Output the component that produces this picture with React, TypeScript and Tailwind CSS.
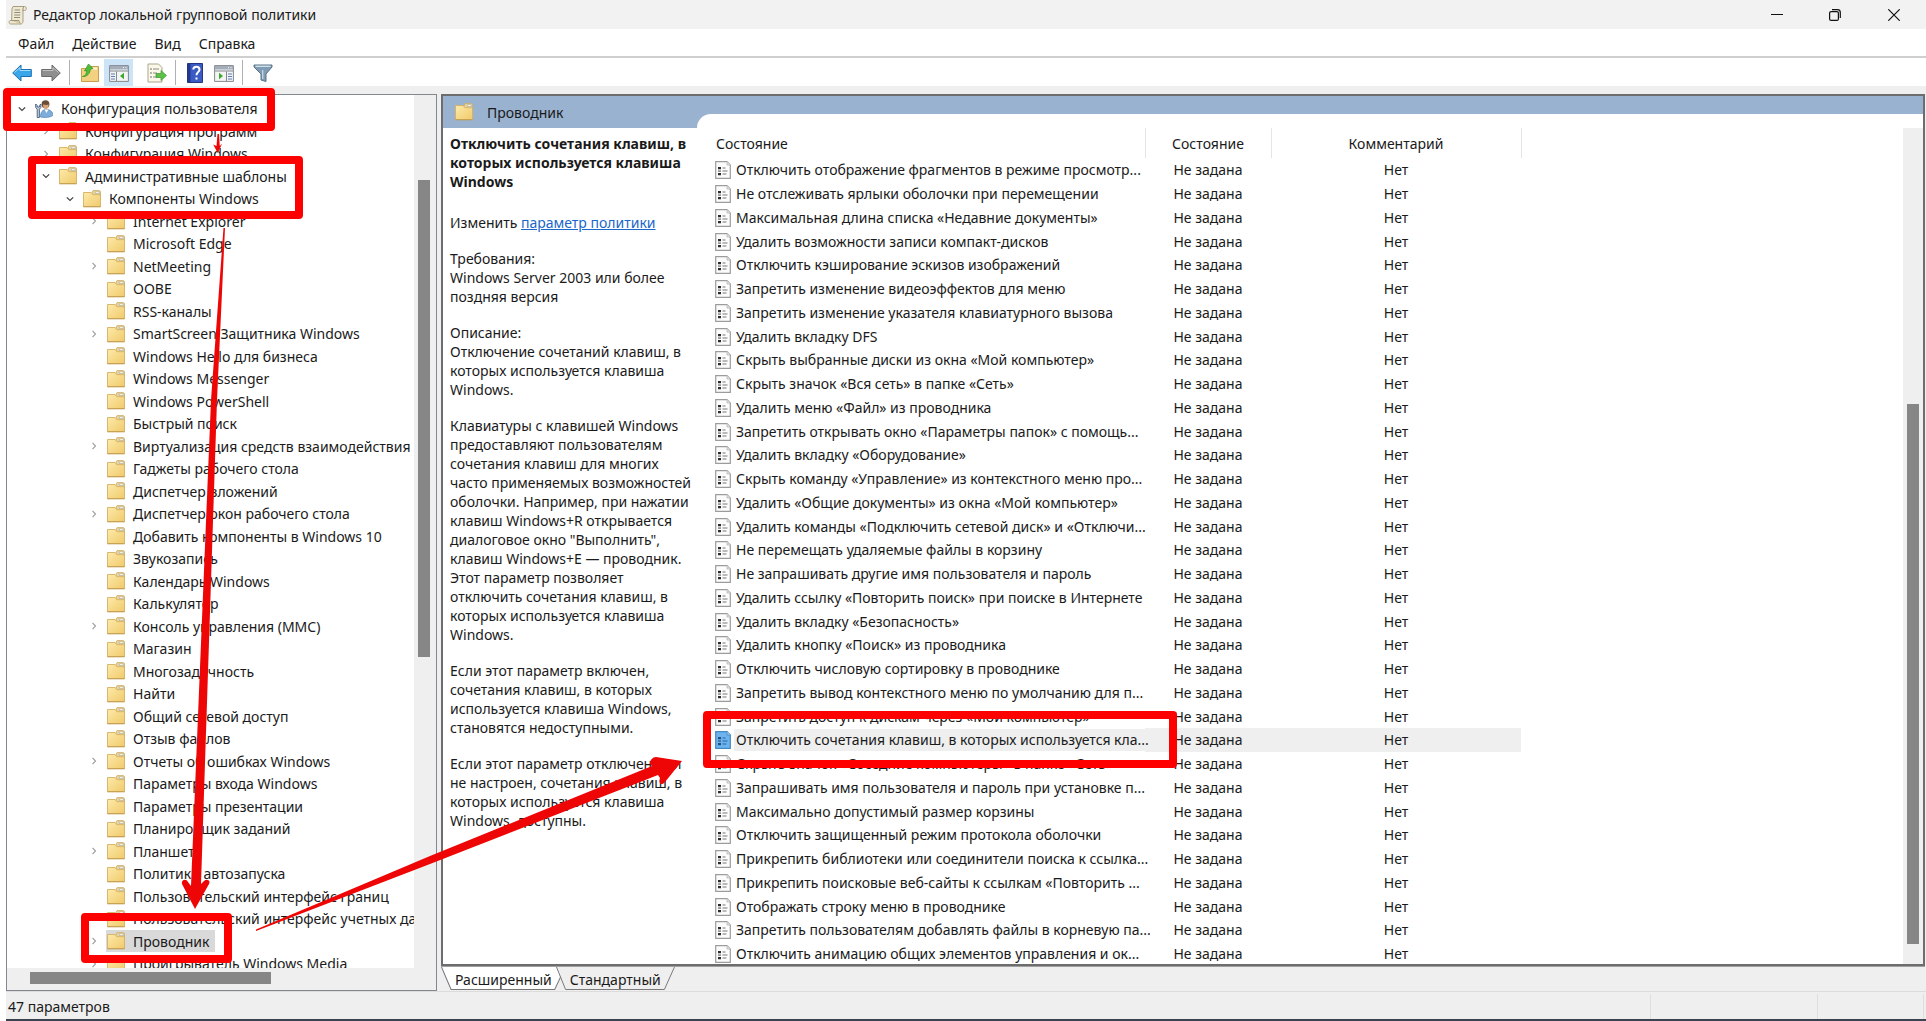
import { useState } from 'react'
import clsx from 'clsx'

type TreeNode = { label: string; level: number; state?: 'open' | 'closed'; user?: boolean }

const tree: TreeNode[] = [
  { label: 'Конфигурация пользователя', level: 0, state: 'open', user: true },
  { label: 'Конфигурация программ', level: 1, state: 'closed' },
  { label: 'Конфигурация Windows', level: 1, state: 'closed' },
  { label: 'Административные шаблоны', level: 1, state: 'open' },
  { label: 'Компоненты Windows', level: 2, state: 'open' },
  { label: 'Internet Explorer', level: 3, state: 'closed' },
  { label: 'Microsoft Edge', level: 3 },
  { label: 'NetMeeting', level: 3, state: 'closed' },
  { label: 'OOBE', level: 3 },
  { label: 'RSS-каналы', level: 3 },
  { label: 'SmartScreen Защитника Windows', level: 3, state: 'closed' },
  { label: 'Windows Hello для бизнеса', level: 3 },
  { label: 'Windows Messenger', level: 3 },
  { label: 'Windows PowerShell', level: 3 },
  { label: 'Быстрый поиск', level: 3 },
  { label: 'Виртуализация средств взаимодействия с', level: 3, state: 'closed' },
  { label: 'Гаджеты рабочего стола', level: 3 },
  { label: 'Диспетчер вложений', level: 3 },
  { label: 'Диспетчер окон рабочего стола', level: 3, state: 'closed' },
  { label: 'Добавить компоненты в Windows 10', level: 3 },
  { label: 'Звукозапись', level: 3 },
  { label: 'Календарь Windows', level: 3 },
  { label: 'Калькулятор', level: 3 },
  { label: 'Консоль управления (MMC)', level: 3, state: 'closed' },
  { label: 'Магазин', level: 3 },
  { label: 'Многозадачность', level: 3 },
  { label: 'Найти', level: 3 },
  { label: 'Общий сетевой доступ', level: 3 },
  { label: 'Отзыв файлов', level: 3 },
  { label: 'Отчеты об ошибках Windows', level: 3, state: 'closed' },
  { label: 'Параметры входа Windows', level: 3 },
  { label: 'Параметры презентации', level: 3 },
  { label: 'Планировщик заданий', level: 3 },
  { label: 'Планшет', level: 3, state: 'closed' },
  { label: 'Политики автозапуска', level: 3 },
  { label: 'Пользовательский интерфейс границ', level: 3 },
  { label: 'Пользовательский интерфейс учетных данных', level: 3 },
  { label: 'Проводник', level: 3, state: 'closed' },
  { label: 'Проигрыватель Windows Media', level: 3, state: 'closed' },
]

const policies = [
  'Отключить отображение фрагментов в режиме просмотр...',
  'Не отслеживать ярлыки оболочки при перемещении',
  'Максимальная длина списка «Недавние документы»',
  'Удалить возможности записи компакт-дисков',
  'Отключить кэширование эскизов изображений',
  'Запретить изменение видеоэффектов для меню',
  'Запретить изменение указателя клавиатурного вызова',
  'Удалить вкладку DFS',
  'Скрыть выбранные диски из окна «Мой компьютер»',
  'Скрыть значок «Вся сеть» в папке «Сеть»',
  'Удалить меню «Файл» из проводника',
  'Запретить открывать окно «Параметры папок» с помощь...',
  'Удалить вкладку «Оборудование»',
  'Скрыть команду «Управление» из контекстного меню про...',
  'Удалить «Общие документы» из окна «Мой компьютер»',
  'Удалить команды «Подключить сетевой диск» и «Отключи...',
  'Не перемещать удаляемые файлы в корзину',
  'Не запрашивать другие имя пользователя и пароль',
  'Удалить ссылку «Повторить поиск» при поиске в Интернете',
  'Удалить вкладку «Безопасность»',
  'Удалить кнопку «Поиск» из проводника',
  'Отключить числовую сортировку в проводнике',
  'Запретить вывод контекстного меню по умолчанию для п...',
  'Запретить доступ к дискам через «Мой компьютер»',
  'Отключить сочетания клавиш, в которых используется кла...',
  'Скрыть значок «Соседние компьютеры» в папке «Сеть»',
  'Запрашивать имя пользователя и пароль при установке п...',
  'Максимально допустимый размер корзины',
  'Отключить защищенный режим протокола оболочки',
  'Прикрепить библиотеки или соединители поиска к ссылка...',
  'Прикрепить поисковые веб-сайты к ссылкам «Повторить ...',
  'Отображать строку меню в проводнике',
  'Запретить пользователям добавлять файлы в корневую па...',
  'Отключить анимацию общих элементов управления и ок...',
]

const description = [
  ['Требования:', 'Windows Server 2003 или более', 'поздняя версия'],
  ['Описание:', 'Отключение сочетаний клавиш, в', 'которых используется клавиша', 'Windows.'],
  [
    'Клавиатуры с клавишей Windows',
    'предоставляют пользователям',
    'сочетания клавиш для многих',
    'часто применяемых возможностей',
    'оболочки. Например, при нажатии',
    'клавиш Windows+R открывается',
    'диалоговое окно "Выполнить",',
    'клавиш Windows+E — проводник.',
    'Этот параметр позволяет',
    'отключить сочетания клавиш, в',
    'которых используется клавиша',
    'Windows.',
  ],
  ['Если этот параметр включен,', 'сочетания клавиш, в которых', 'используется клавиша Windows,', 'становятся недоступными.'],
  ['Если этот параметр отключен или', 'не настроен, сочетания клавиш, в', 'которых используется клавиша', 'Windows, доступны.'],
]

const indents = ['pl-[7px]', 'pl-[31px]', 'pl-[55px]', 'pl-[79px]']

function FolderIcon() {
  return (
    <svg className="h-[18px] w-[18px] shrink-0" viewBox="0 0 18 18">
      <defs>
        <linearGradient id="folder" x1="0" y1="0" x2="1" y2="1">
          <stop offset="0" stopColor="#fdeaa9" />
          <stop offset="1" stopColor="#f0ca6c" />
        </linearGradient>
      </defs>
      <path d="M8.500 4 10 .6h6.500l1 1V6h-9z" fill="#ead59c" stroke="#c9a95f" strokeWidth=".8" />
      <path d="M12.300 1.800h4v1.700h-4z" fill="#fff" stroke="#aaa593" strokeWidth=".6" />
      <path d="M.5 2.500h7.700l1.600 2.200h7.700v11.800H.5z" fill="url(#folder)" stroke="#d5b063" strokeWidth=".9" />
      <path d="M.3 16.800h17.400" stroke="#c29c4c" strokeWidth="1" />
    </svg>
  )
}

function UserIcon() {
  return (
    <svg className="h-[18px] w-[18px] shrink-0" viewBox="0 0 18 18">
      <circle cx="10.500" cy="4.200" r="3.900" fill="#6b4d35" />
      <path d="M8 4.500c0 3.200 1.200 4.800 2.800 4.800s3-2 2.800-5c-2 1.200-3.600.2-5.600.2z" fill="#d9a47a" />
      <path d="M5.500 17c0-5 2-7.500 6-7.500s6.500 2.500 6.300 6c-2 1.800-8 2.500-12.300 1.500z" fill="#7fadd9" stroke="#4d80b5" strokeWidth=".7" />
      <path d="m9.500 9.500 2 3.500 2-3.500" fill="#fff" />
      <path d="M.7 4v3.500l1.500 1.700v8.300h2.200V9.200l1.400-1.700V4L4.400 5.500V7H2.200V5.500z" fill="#c5ced9" stroke="#3f5c7c" strokeWidth=".9" />
    </svg>
  )
}

function PolicyIcon({ active }: { active: boolean }) {
  return (
    <svg className="block h-[18px] w-4 shrink-0" viewBox="0 0 16 18">
      <path d="M.7.7h11.300l3.300 3.300v13.300H.7z" fill={active ? '#6db3ee' : '#fcfcfc'} stroke={active ? '#4389c4' : '#9c9c9c'} strokeWidth="1.200" />
      <path d="M12 .7V4h3.300" fill={active ? '#a5d2f7' : '#e4e4e4'} stroke={active ? '#4389c4' : '#b5b5b5'} strokeWidth=".8" />
      <path d="M3 6h3v2.200H3zM3 12h3v2.200H3z" fill={active ? '#1f4f80' : '#2b2b2b'} />
      <path d="M3 9.300h3v1.600H3z" fill={active ? '#3772a8' : '#888'} />
      <path d="M7.500 7h3M7.500 10h5M7.500 13h4" stroke={active ? '#2a659c' : '#777'} />
    </svg>
  )
}

function ScrollIcon() {
  return (
    <svg className="h-5 w-5" viewBox="0 0 20 20">
      <path d="M5 1.500h11.500c2.500 0 2.500 4 0 4H15V16c0 2-1 3-2.500 3H2.800C.5 19 .6 15.500 2.600 15.500h1L4 4z" fill="#efe9d3" stroke="#a99f80" />
      <path d="M14.500 5.500c1-1 0-3 1.500-3.500" fill="none" stroke="#8f8566" />
      <path d="M6.500 5h5.500M6.300 7.500h6M6.200 10h6M6 12.500h6" stroke="#918b78" />
      <path d="M2.800 15.500h8c1 1 .5 3 1.700 3.400" fill="#d6cba6" stroke="#9f9472" />
    </svg>
  )
}

function ArrowIcon({ back }: { back?: boolean }) {
  return (
    <svg className="h-5 w-5" viewBox="0 0 20 20">
      {back ? (
        <path d="M.7 10 9 2v4.500h10.300v7H9V18z" fill="#39a6ea" stroke="#1c6fb0" strokeLinejoin="round" />
      ) : (
        <path d="M19.300 10 11 2v4.500H.7v7H11V18z" fill="#8f8f8f" stroke="#6b6b6b" strokeLinejoin="round" />
      )}
      <path d={back ? 'M2.500 9.500 8 4.500v3h10.300' : 'M1.700 7.500H12v-3l5.500 5'} fill="none" stroke={back ? '#a5dcfa' : '#c2c2c2'} />
    </svg>
  )
}

function UpFolderIcon() {
  return (
    <svg className="h-5 w-5" viewBox="0 0 20 20">
      <path d="M1.500 5.500h7l1.500-2h8.500v15h-17z" fill="#f2d181" stroke="#c8a04c" />
      <path d="M12 4.500h5v2h-5z" fill="#fff8dc" />
      <path d="M2.500 13.500c3-.5 4-3 4.300-6L4.500 8 8.500 1 13 5.500l-2.600.6c-.4 4.400-3.400 7.900-7.900 7.400z" fill="#4fbe3a" stroke="#2f8f22" strokeWidth=".7" />
    </svg>
  )
}

function PaneIcon({ right }: { right?: boolean }) {
  return (
    <svg className="h-5 w-5" viewBox="0 0 20 20">
      <path d="M.6 2.600h18.800v15.800H.6z" fill="#f4f4f4" stroke="#83888f" />
      <path d="M1 3h18v3.500H1z" fill="#a4aebb" />
      <path d="M14 4.700h1M16.500 4.700h1" stroke="#fff" />
      <path d="M1 8h18" stroke="#83888f" />
      <path d={right ? 'M12.500 8.500v9.500' : 'M7.500 8.500v9.500'} stroke="#83888f" />
      <path d={right ? 'M14 11h4M14 13.500h4M14 16h4' : 'M2 11h4M2 13.500h4M2 16h4'} stroke="#5a7fae" />
      <path d={right ? 'M5 9.800v6.400l4-3.200z' : 'M15 9.800v6.400L11 13z'} fill="#3aa92c" />
    </svg>
  )
}

function ExportIcon() {
  return (
    <svg className="h-5 w-5" viewBox="0 0 20 20">
      <path d="M1 1h10.500L15 4.500V19H1z" fill="#fbf8ea" stroke="#aaa58c" />
      <path d="M3.500 6h1M3.500 10h1M3.500 14h1" stroke="#444" strokeWidth="1.400" />
      <path d="M6 6h6M6 10h4M6 14h4" stroke="#8a8a8a" />
      <path d="M9 10.500h5V7.500l5.500 5-5.500 5v-3H9z" fill="#5cc148" stroke="#3b9a2b" strokeWidth=".7" />
    </svg>
  )
}

function HelpIcon() {
  return (
    <svg className="h-5 w-5" viewBox="0 0 20 20">
      <path d="M2.500.5h15v19h-15z" fill="#3a5bc4" stroke="#23367f" />
      <path d="M3 1h2.500v18H3z" fill="#23398f" />
      <path d="M8.300 6.500c0-3.800 6.200-3.800 6.200 0 0 2.600-3 2.700-3 5.700M11.500 14.500v2" fill="none" stroke="#fff" strokeWidth="2" />
    </svg>
  )
}

function FilterIcon() {
  return (
    <svg className="h-5 w-5" viewBox="0 0 20 20">
      <path d="M1 2h18v2l-6 7v7.500L8 17v-6L1 4z" fill="#7f9cb4" stroke="#587389" />
      <path d="M2.500 3.300h15" stroke="#d3e0ea" strokeWidth="1.400" />
      <path d="M9.700 7v9" stroke="#c3d3df" strokeWidth="1.400" />
    </svg>
  )
}

function ToolButton({ label, active, children }: { label: string; active?: boolean; children: React.ReactNode }) {
  return (
    <button
      aria-label={label}
      className={clsx('flex h-[27px] w-[29px] items-center justify-center', active && 'bg-[#cce4f7]')}
    >
      {children}
    </button>
  )
}

function Separator() {
  return <div className="mx-[4px] h-[25px] w-px bg-[#b0b0b0]" />
}

function Tree() {
  const [selected, setSelected] = useState('Проводник')

  return (
    <div className="flex w-[431px] shrink-0 flex-col border border-[#828790] bg-white">
      <div className="flex min-h-0 flex-1">
        <ul className="min-w-0 flex-1 overflow-hidden pt-[2px] text-[14px]">
          {tree.map((node) => (
            <li key={node.label} className={clsx('flex items-center whitespace-nowrap odd:h-[23px] even:h-[22px]', indents[node.level])}>
              <button className="flex w-4 shrink-0 justify-center" aria-label={node.state ? node.label : undefined} disabled={!node.state}>
                {node.state && (
                  <svg className="h-2 w-2" viewBox="0 0 8 8" fill="none" strokeWidth="1.200">
                    {node.state === 'open' ? <path d="m.8 2.300 3.200 3.200 3.200-3.200" stroke="#404040" /> : <path d="M2.500.8 5.500 4l-3 3.200" stroke="#a0a0a0" />}
                  </svg>
                )}
              </button>
              <button
                onClick={() => setSelected(node.label)}
                className={clsx('ml-1 flex h-full items-center gap-2 pr-[6px] pl-px', selected === node.label && 'bg-[#d9d9d9]')}
              >
                {node.user ? <UserIcon /> : <FolderIcon />}
                {node.label}
              </button>
            </li>
          ))}
        </ul>
        <div className="flex w-[22px] flex-col bg-[#efefef]">
          <div className="mt-[85px] ml-1 h-[477px] w-[12px] bg-[#868686]" />
        </div>
      </div>
      <div className="h-[22px] bg-[#efefef] pt-[4px] pl-[23px]">
        <div className="h-[12px] w-[241px] bg-[#868686]" />
      </div>
    </div>
  )
}

function PolicyTable() {
  const selected = 24

  return (
    <table className="w-[824px] table-fixed text-[14px] whitespace-nowrap">
      <colgroup>
        <col className="w-[448px]" />
        <col className="w-[126px]" />
        <col className="w-[250px]" />
      </colgroup>
      <thead>
        <tr className="h-[30px]">
          <th className="border-r border-[#e5e5e5] pl-[19px] text-left font-normal">Состояние</th>
          <th className="border-r border-[#e5e5e5] font-normal">Состояние</th>
          <th className="border-r border-[#e5e5e5] font-normal">Комментарий</th>
        </tr>
      </thead>
      <tbody className="text-center leading-[22px]">
        {policies.map((policy, i) => (
          <tr key={policy} className="h-[24px] nth-[4n]:h-[23px]">
            <td className="p-0">
              <div className="flex items-center pl-[18px] text-left">
                <PolicyIcon active={i === selected} />
                <span className={clsx('ml-[3px] flex-1 pl-[2px]', i === selected && 'bg-[#efefef]')}>{policy}</span>
              </div>
            </td>
            <td className={clsx('p-0', i === selected && 'bg-[#efefef]')}>Не задана</td>
            <td className={clsx('p-0', i === selected && 'bg-[#efefef]')}>Нет</td>
          </tr>
        ))}
      </tbody>
    </table>
  )
}

function Details() {
  return (
    <section className="flex min-h-0 flex-1 flex-col border-2 border-[#6d6d6d] bg-white">
      <div className="flex h-[32px] shrink-0 bg-[#99b2cf]">
        <div className="flex w-[254px] shrink-0 items-center gap-[14px] pl-[12px] text-[14px]">
          <FolderIcon />
          Проводник
        </div>
        <div className="mt-[18px] flex-1 rounded-tl-[14px] bg-white" />
      </div>
      <div className="flex min-h-0 flex-1">
        <article className="w-[254px] shrink-0 overflow-hidden pt-[6px] pl-[7px] text-[14px] leading-[19px] whitespace-nowrap">
          <h2 className="font-bold">
            Отключить сочетания клавиш, в
            <br />
            которых используется клавиша
            <br />
            Windows
          </h2>
          <p className="mt-[22px]">
            Изменить <a href="#policy" className="text-[#1a66c9] underline">параметр политики</a>
          </p>
          {description.map((lines, i) => (
            <p key={i} className="mt-[17px]">
              {lines.map((line) => (
                <span key={line} className="block">{line}</span>
              ))}
            </p>
          ))}
        </article>
        <div className="min-w-0 flex-1 overflow-hidden">
          <PolicyTable />
        </div>
        <div className="flex w-[20px] flex-col bg-[#efefef]">
          <div className="mt-[276px] ml-1 h-[540px] w-[12px] bg-[#868686]" />
        </div>
      </div>
    </section>
  )
}

function ViewTab({ label, active }: { label: string; active?: boolean }) {
  return (
    <button className="relative -mr-[10px] h-[23px] px-[14px] text-[14px] leading-[25px]">
      <svg className="absolute inset-0 h-full w-full" viewBox="0 0 124 23" preserveAspectRatio="none">
        <path d="M.5 0 10 22.500h103L123.500 0" fill={active ? '#fff' : '#efefef'} stroke="#777" />
      </svg>
      <span className="relative">{label}</span>
    </button>
  )
}

// Red marks drawn over the window: frames round the clicked items and arrows between them
function Highlights() {
  return (
    <svg className="pointer-events-none absolute top-0 left-0 h-[1021px] w-[1926px]" viewBox="0 0 1926 1021">
      <g fill="none" stroke="#fe0000" strokeWidth="8" strokeLinejoin="round">
        <rect x="7" y="92" width="264" height="35" />
        <rect x="32" y="160" width="267" height="55" />
        <rect x="85" y="917" width="143" height="42" />
        <rect x="707" y="715" width="466" height="49" />
      </g>
      <g fill="#ee0606">
        <path d="M217.500 134h1.500l.8 12 2.400-2.500-4.500 9.500-4.500-8.500 3.300 1.500z" />
        <path d="M223.500 228h1.500L217 400l-16 484 3-3c3-3 7 0 5 3l-14 25-13-25c-1-4 4-6 6-2l3 4L211 400z" />
        <path d="M256 929.500 430 856l222-90c-4-2-1-9 4-9l26 4-17 21c-3 4-7 2-5-4l-2-3L430 864 256 931z" />
      </g>
    </svg>
  )
}

export default function App() {
  return (
    <div className="relative h-screen overflow-hidden bg-white pl-[6px] font-['Noto_Sans',sans-serif] text-[#1a1a1a]">
      <div className="flex h-full flex-col border-b-2 border-[#3c4350] bg-[#efefef]">
        <header className="flex h-[29px] shrink-0 items-center bg-[#f2f2f2] pr-[2px] pl-[2px]">
          <ScrollIcon />
          <h1 className="ml-[5px] flex-1 text-[14px]">Редактор локальной групповой политики</h1>
          <div className="flex h-full">
            <button className="flex w-[58px] items-center justify-center" aria-label="Свернуть">
              <svg className="h-3 w-3" viewBox="0 0 12 12"><path d="M0 5.500h12" stroke="#111" /></svg>
            </button>
            <button className="flex w-[58px] items-center justify-center" aria-label="Развернуть">
              <svg className="h-3 w-3" viewBox="0 0 12 12" fill="none" stroke="#111" strokeWidth="1.200">
                <rect x=".6" y="2.600" width="8.800" height="8.800" rx="1.500" />
                <path d="M3 .7h5.500c1.600 0 2.800 1 2.800 2.800V9" />
              </svg>
            </button>
            <button className="flex w-[60px] items-center justify-center" aria-label="Закрыть">
              <svg className="h-3 w-3" viewBox="0 0 12 12"><path d="m.3.3 11.400 11.400M11.700.3.3 11.700" stroke="#111" strokeWidth="1.200" /></svg>
            </button>
          </div>
        </header>
        <nav className="flex h-[29px] shrink-0 items-center gap-[18px] border-b-2 border-[#cfcfcf] bg-white pt-[2px] pl-3 text-[14px]">
          <button>Файл</button>
          <button>Действие</button>
          <button>Вид</button>
          <button>Справка</button>
        </nav>
        <div className="flex h-[28px] shrink-0 items-center bg-white pt-px pl-px">
          <ToolButton label="Назад"><ArrowIcon back /></ToolButton>
          <ToolButton label="Вперед"><ArrowIcon /></ToolButton>
          <Separator />
          <div className="w-px" />
          <ToolButton label="Вверх"><UpFolderIcon /></ToolButton>
          <ToolButton label="Дерево консоли" active><PaneIcon /></ToolButton>
          <div className="w-[9px]" />
          <ToolButton label="Экспорт"><ExportIcon /></ToolButton>
          <Separator />
          <ToolButton label="Справка"><HelpIcon /></ToolButton>
          <ToolButton label="Область действий"><PaneIcon right /></ToolButton>
          <Separator />
          <div className="w-px" />
          <ToolButton label="Фильтр"><FilterIcon /></ToolButton>
        </div>
        <main className="flex min-h-0 flex-1 gap-1 pt-[8px]">
          <Tree />
          <div className="flex min-w-0 flex-1 flex-col pr-px">
            <Details />
            <div className="flex h-[25px] shrink-0 border-t border-[#a0a0a0]">
              <ViewTab label="Расширенный" active />
              <ViewTab label="Стандартный" />
            </div>
          </div>
        </main>
        <footer className="flex h-[28px] shrink-0 items-center border-t border-[#dcdcdc] pt-[2px] pr-[2px] text-[14px]">
          <span className="flex-1 pl-[2px]">47 параметров</span>
          <div className="h-full w-[167px] border-l border-[#dedede]" />
          <div className="h-full w-[107px] border-x border-[#dedede]" />
        </footer>
      </div>
      <Highlights />
    </div>
  )
}
